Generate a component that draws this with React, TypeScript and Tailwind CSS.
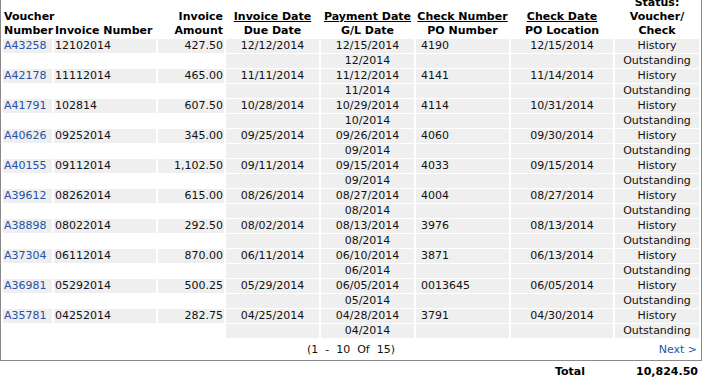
const rows = [
  ['A43258', '12102014', '427.50', '12/12/2014', '12/15/2014', '4190', '12/15/2014', '12/2014'],
  ['A42178', '11112014', '465.00', '11/11/2014', '11/12/2014', '4141', '11/14/2014', '11/2014'],
  ['A41791', '102814', '607.50', '10/28/2014', '10/29/2014', '4114', '10/31/2014', '10/2014'],
  ['A40626', '09252014', '345.00', '09/25/2014', '09/26/2014', '4060', '09/30/2014', '09/2014'],
  ['A40155', '09112014', '1,102.50', '09/11/2014', '09/15/2014', '4033', '09/15/2014', '09/2014'],
  ['A39612', '08262014', '615.00', '08/26/2014', '08/27/2014', '4004', '08/27/2014', '08/2014'],
  ['A38898', '08022014', '292.50', '08/02/2014', '08/13/2014', '3976', '08/13/2014', '08/2014'],
  ['A37304', '06112014', '870.00', '06/11/2014', '06/10/2014', '3871', '06/13/2014', '06/2014'],
  ['A36981', '05292014', '500.25', '05/29/2014', '06/05/2014', '0013645', '06/05/2014', '05/2014'],
  ['A35781', '04252014', '282.75', '04/25/2014', '04/28/2014', '3791', '04/30/2014', '04/2014'],
];

const cell = 'px-[1px] py-0 h-[14px] leading-[14px] whitespace-nowrap';
const gray = 'bg-[#efefef]';

export default function App() {
  return (
    <div className="w-[703px] h-[384px] overflow-hidden bg-white font-['DejaVu_Sans','Verdana',sans-serif] text-[11px] text-[#111]">
      <div className="w-[702px] -mt-[6px] border border-[#8a8a8a]">
        <table className="w-full table-fixed border-separate [border-spacing:2px_1px]">
          <thead>
            <tr className="font-bold text-black align-bottom leading-[14px]">
              <th className="w-[49px] px-[1px] text-left font-bold">Voucher<br />Number</th>
              <th className="w-[102px] px-[1px] text-left font-bold">Invoice Number</th>
              <th className="w-[66px] px-[1px] text-right font-bold">Invoice<br />Amount</th>
              <th className="w-[93px] px-[1px] text-center font-bold"><span className="underline">Invoice Date</span><br />Due Date</th>
              <th className="w-[93px] px-[1px] text-center font-bold"><span className="underline">Payment Date</span><br />G/L Date</th>
              <th className="w-[93px] px-[1px] text-center font-bold"><span className="underline">Check Number</span><br />PO Number</th>
              <th className="w-[102px] px-[1px] text-center font-bold"><span className="underline">Check Date</span><br />PO Location</th>
              <th className="w-[84px] px-[1px] text-center font-bold">Status:<br />Voucher/<br />Check</th>
            </tr>
          </thead>
          <tbody>
            {rows.map((r) => [
              <tr key={r[0]}>
                <td className={`${cell} ${gray} text-left`}><a className="text-[#2552a8] cursor-pointer">{r[0]}</a></td>
                <td className={`${cell} ${gray} text-left`}>{r[1]}</td>
                <td className={`${cell} ${gray} text-right`}>{r[2]}</td>
                <td className={`${cell} ${gray} text-center`}>{r[3]}</td>
                <td className={`${cell} ${gray} text-center`}>{r[4]}</td>
                <td className={`${cell} ${gray} text-left pl-[5px]`}>{r[5]}</td>
                <td className={`${cell} ${gray} text-center`}>{r[6]}</td>
                <td className={`${cell} ${gray} text-center`}>History</td>
              </tr>,
              <tr key={r[0] + '-b'}>
                <td className={cell}></td>
                <td className={cell}></td>
                <td className={cell}></td>
                <td className={`${cell} ${gray}`}></td>
                <td className={`${cell} ${gray} text-center`}>{r[7]}</td>
                <td className={`${cell} ${gray}`}></td>
                <td className={`${cell} ${gray}`}></td>
                <td className={`${cell} ${gray} text-center`}>Outstanding</td>
              </tr>,
            ])}
            <tr>
              <td colSpan={8} className="relative px-[1px] pt-[4px] pb-[2px] leading-[14px] text-center">
                (1&nbsp;&nbsp;-&nbsp;&nbsp;10&nbsp;&nbsp;Of&nbsp;&nbsp;15)
                <a className="absolute right-[2px] top-[4px] text-[#2552a8] cursor-pointer">Next &gt;</a>
              </td>
            </tr>
          </tbody>
        </table>
      </div>
      <div className="flex justify-end pr-[5px] mt-[4px] leading-[14px] font-bold text-black">
        <span>Total</span>
        <span className="w-[113px] text-right">10,824.50</span>
      </div>
    </div>
  );
}
